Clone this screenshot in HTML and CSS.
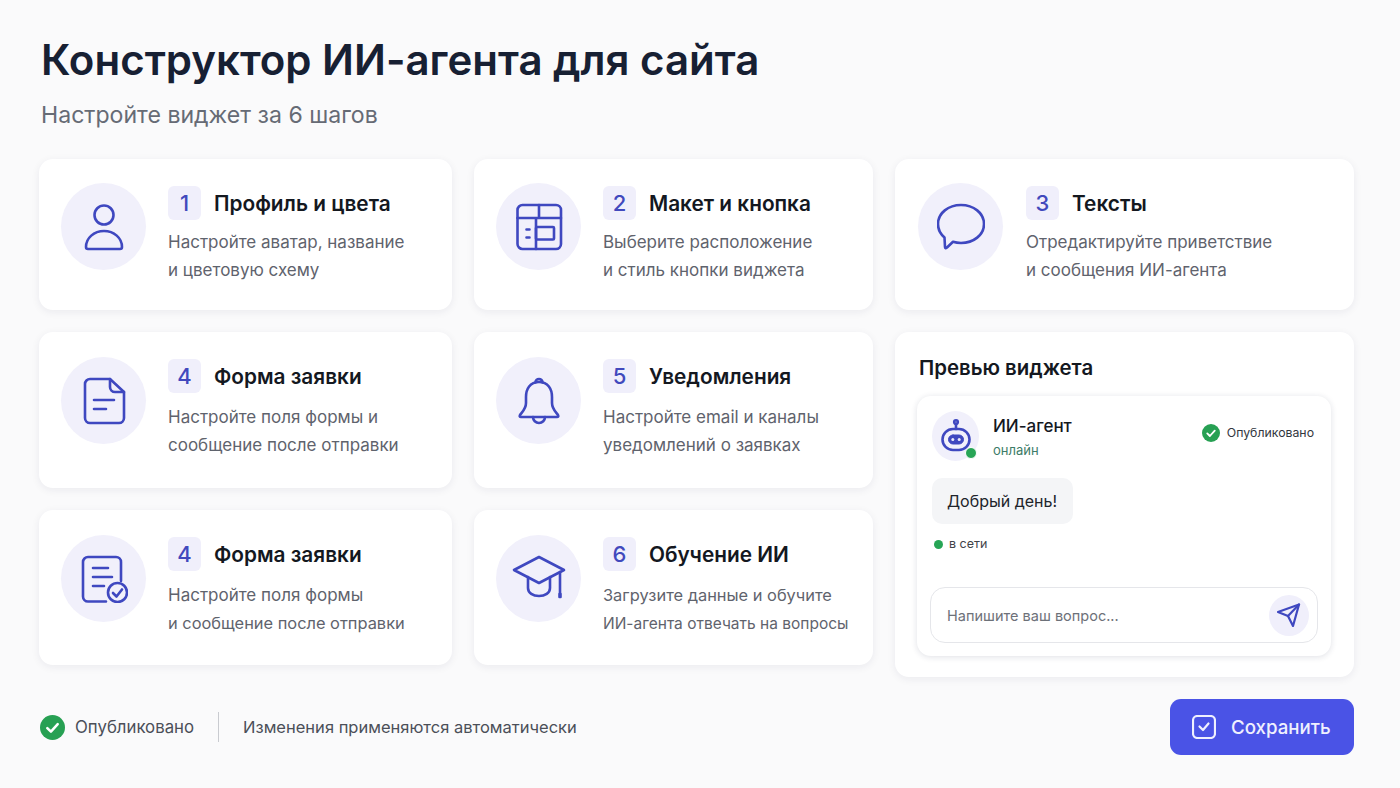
FILE: index.html
```html
<!DOCTYPE html>
<html lang="ru">
<head>
    <meta charset="UTF-8">
    <meta name="viewport" content="width=device-width, initial-scale=1.0">
    <title>Конструктор ИИ-агента</title>
    <link rel="stylesheet" href="styles.css">
</head>
<body>

<header class="page-head">
    <h1>Конструктор ИИ-агента для сайта</h1>
    <p>Настройте виджет за 6 шагов</p>
</header>

<main class="steps">

    <section class="step step-short">
        <div class="step-icon">
            <svg class="icon" width="48" height="48" viewBox="0 0 48 48">
                <circle cx="24" cy="12" r="9.5"/>
                <path d="M8 46H40a2 2 0 0 0 2-2C42 35 34 28 24 28S6 35 6 44a2 2 0 0 0 2 2Z"/>
            </svg>
        </div>
        <div class="step-body">
            <div class="step-title"><span class="num">1</span><h3>Профиль и цвета</h3></div>
            <p>Настройте аватар, название<br>и цветовую схему</p>
        </div>
    </section>

    <section class="step step-short">
        <div class="step-icon">
            <svg class="icon" width="48" height="48" viewBox="0 0 48 48">
                <rect x="2.5" y="2" width="43.5" height="44" rx="5"/>
                <path d="M2.5 15H46M24 2V15M21 15V46"/>
                <rect x="21" y="24" width="18" height="12.5" rx="1"/>
                <path d="M11.5 26.500H14.500M11.500 34.500H14.500"/>
            </svg>
        </div>
        <div class="step-body">
            <div class="step-title"><span class="num">2</span><h3>Макет и кнопка</h3></div>
            <p>Выберите расположение<br>и стиль кнопки виджета</p>
        </div>
    </section>

    <section class="step step-short step-wide">
        <div class="step-icon">
            <svg class="icon" width="48" height="48" viewBox="0 0 48 48">
                <path d="M24 2C36.500 2 47 10 47 21C47 32 36.500 40 24 40C21 40 18.500 39.600 16 38.800L10 44.500Q8 46 8 44L7.500 34.500C3.500 31 1 26.500 1 21C1 10 11.500 2 24 2Z"/>
            </svg>
        </div>
        <div class="step-body">
            <div class="step-title"><span class="num">3</span><h3>Тексты</h3></div>
            <p>Отредактируйте приветствие<br>и сообщения ИИ-агента</p>
        </div>
    </section>

    <section class="step">
        <div class="step-icon">
            <svg class="icon" width="48" height="48" viewBox="0 0 48 48">
                <path d="M10 2H30L44 15V41a5 5 0 0 1-5 5H10a5 5 0 0 1-5-5V7a5 5 0 0 1 5-5Z"/>
                <path d="M30 2V10a5 5 0 0 0 5 5H44"/>
                <path d="M14 23H34M14 32H26"/>
            </svg>
        </div>
        <div class="step-body">
            <div class="step-title"><span class="num">4</span><h3>Форма заявки</h3></div>
            <p>Настройте поля формы и<br>сообщение после отправки</p>
        </div>
    </section>

    <section class="step">
        <div class="step-icon">
            <svg class="icon" width="48" height="48" viewBox="0 0 48 48">
                <path d="M24 5C15 5 11 12 11 20V26C11 32 7 35 5 38Q4 40 6 40H42Q44 40 43 38C41 35 37 32 37 26V20C37 12 33 5 24 5Z"/>
                <path d="M20.500 5.500a3.500 3.500 0 0 1 7 0"/>
                <path d="M18 40a6 6 0 0 0 12 0"/>
            </svg>
        </div>
        <div class="step-body">
            <div class="step-title"><span class="num">5</span><h3>Уведомления</h3></div>
            <p>Настройте email и каналы<br>уведомлений о заявках</p>
        </div>
    </section>

    <aside class="preview">
        <h2>Превью виджета</h2>
        <div class="widget">
            <div class="widget-head">
                <div class="avatar">
                    <svg class="icon icon-thin" width="32" height="36" viewBox="0 0 32 36">
                        <circle cx="16" cy="4" r="1.800"/>
                        <path d="M16 6V11"/>
                        <rect x="2.500" y="11" width="27" height="21" rx="10.500"/>
                        <rect class="face" x="8.500" y="17" width="15" height="9" rx="4.500"/>
                        <circle class="eye" cx="12.800" cy="21.500" r="1.500"/>
                        <circle class="eye" cx="19.200" cy="21.500" r="1.500"/>
                    </svg>
                    <span class="avatar-dot"></span>
                </div>
                <div class="agent">
                    <strong>ИИ-агент</strong>
                    <span>онлайн</span>
                </div>
                <div class="widget-status">
                    <svg class="check" width="18" height="18" viewBox="0 0 24 24">
                        <circle cx="12" cy="12" r="12"/>
                        <path d="M7 12.500L10.500 16L17 8.800"/>
                    </svg>
                    Опубликовано
                </div>
            </div>
            <div class="bubble">Добрый день!</div>
            <div class="net"><span class="net-dot"></span>в сети</div>
            <div class="ask">
                <span>Напишите ваш вопрос...</span>
                <div class="send">
                    <svg class="icon icon-send" width="24" height="24" viewBox="0 0 24 24">
                        <path d="M22 1.500L1 9L11 13L16 23L22 1.500Z"/>
                        <path d="M11 13L22 1.500"/>
                    </svg>
                </div>
            </div>
        </div>
    </aside>

    <section class="step">
        <div class="step-icon">
            <svg class="icon" width="48" height="48" viewBox="0 0 48 48">
                <path d="M26 46.500H8a5 5 0 0 1-5-5V7a5 5 0 0 1 5-5H36a5 5 0 0 1 5 5V26"/>
                <path d="M13 13H28M13 22H32M13 31H24"/>
                <circle cx="37.500" cy="37.500" r="9.500"/>
                <path d="M33 38L36.500 41.500L42 34.500"/>
            </svg>
        </div>
        <div class="step-body">
            <div class="step-title"><span class="num">4</span><h3>Форма заявки</h3></div>
            <p>Настройте поля формы<br><span class="line-s">и сообщение после отправки</span></p>
        </div>
    </section>

    <section class="step">
        <div class="step-icon">
            <svg class="icon" width="56" height="56" viewBox="0 0 56 56">
                <path d="M28 6L3 19L28 32L53 19L28 6Z"/>
                <path d="M17 26V37C17 42 22 45 28 45S39 42 39 37V26"/>
                <path d="M49 21V42"/>
                <path d="M48.500 43H49.500V46H48.500Z"/>
            </svg>
        </div>
        <div class="step-body">
            <div class="step-title"><span class="num">6</span><h3>Обучение ИИ</h3></div>
            <p><span class="line-s">Загрузите данные и обучите</span><br><span class="line-xs">ИИ-агента отвечать на вопросы</span></p>
        </div>
    </section>
</main>

<footer class="page-foot">
    <div class="state">
        <svg class="check" width="25" height="25" viewBox="0 0 24 24">
            <circle cx="12" cy="12" r="12"/>
            <path d="M7 12.500L10.500 16L17 8.800"/>
        </svg>
        <span class="state-name">Опубликовано</span>
        <i class="sep"></i>
        <span>Изменения применяются автоматически</span>
    </div>
    <button class="save" type="button">
        <svg class="save-icon" width="24" height="24" viewBox="0 0 24 24">
            <rect x="1" y="1" width="22" height="22" rx="4.500"/>
            <path d="M7.500 11.500L11 15L16.500 8.500"/>
        </svg>
        Сохранить
    </button>
</footer>

</body>
</html>
```

FILE: styles.css
```css
body {
    font-family: 'Inter', 'Liberation Sans', sans-serif;
    margin: 0;
    padding: 0;
    height: 788px;
    overflow: hidden;
    background-color: #fafafb;
    color: #14181f;
}

.page-head {
    padding: 35px 40px 0 41px;
}

.page-head h1 {
    margin: 0;
    font-size: 42px;
    line-height: 50px;
    font-weight: 600;
    color: #172033;
}

.page-head p {
    margin: 16px 0 0;
    font-size: 23.100px;
    line-height: 28px;
    color: #666b75;
}

.steps {
    display: grid;
    grid-template-columns: 413px 399px 459px;
    grid-template-rows: 151px 156px 155px;
    gap: 22px;
    margin: 30px 0 0 39px;
}

.step {
    display: flex;
    gap: 22px;
    padding: 25px 0 0 22px;
    background: white;
    border-radius: 14px;
    box-shadow: 0 2px 8px rgba(30, 35, 70, 0.07);
}

.step-short {
    padding-top: 24px;
}

.step-wide {
    padding-left: 23px;
    gap: 23px;
}

.step-icon {
    flex: none;
    display: flex;
    align-items: center;
    justify-content: center;
    width: 85px;
    height: 87px;
    border-radius: 50%;
    background: #f1f0fb;
}

.icon {
    fill: none;
    stroke: #3f48c0;
    stroke-width: 2.600;
    stroke-linecap: round;
    stroke-linejoin: round;
}

.step-body {
    padding-top: 2px;
}

.step-short .step-body {
    padding-top: 3px;
}

.step-short .step-body p {
    margin-top: 8px;
}

.step-title {
    display: flex;
    align-items: center;
    gap: 13px;
}

.num {
    width: 33px;
    height: 34px;
    display: flex;
    align-items: center;
    justify-content: center;
    border-radius: 6px;
    background: #f0effb;
    color: #4149bd;
    font-size: 22px;
    font-weight: 500;
}

.step-title h3 {
    margin: 0;
    font-size: 20.800px;
    font-weight: 600;
    color: #14181f;
}

.step-body p {
    margin: 10px 0 0;
    font-size: 17px;
    line-height: 28px;
    color: #5f636d;
}

.line-s {
    font-size: 16.400px;
}

.line-xs {
    font-size: 15.500px;
}

.preview {
    grid-column: 3;
    grid-row: 2 / span 2;
    margin-bottom: -12px;
    padding: 23px 23px 21px 22px;
    background: white;
    border-radius: 14px;
    box-shadow: 0 2px 8px rgba(30, 35, 70, 0.07);
    display: flex;
    flex-direction: column;
}

.preview h2 {
    margin: 0 0 15px 2px;
    font-size: 20.400px;
    line-height: 26px;
    font-weight: 600;
}

.widget {
    flex: 1;
    padding: 15px 13px 13px 13px;
    border-radius: 14px;
    box-shadow: 0 1px 6px rgba(30, 35, 70, 0.14);
    display: flex;
    flex-direction: column;
}

.widget-head {
    display: flex;
    align-items: flex-start;
    padding-left: 2px;
}

.avatar {
    position: relative;
    flex: none;
    width: 47px;
    height: 50px;
    border-radius: 50%;
    background: #f1f0fb;
    display: flex;
    align-items: center;
    justify-content: center;
}

.avatar-dot {
    position: absolute;
    right: 2px;
    bottom: 2px;
    width: 10px;
    height: 10px;
    border-radius: 50%;
    background: #27a556;
    border: 1px solid white;
}

.face {
    fill: #3f48c0;
    stroke-width: 1;
}

.eye {
    fill: #e9e9fb;
    stroke: none;
}

.agent {
    margin-left: 14px;
    padding-top: 1px;
    display: flex;
    flex-direction: column;
}

.agent strong {
    font-size: 17px;
    line-height: 28px;
    font-weight: 500;
}

.agent span {
    font-size: 13px;
    line-height: 20px;
    color: #3d7c68;
}

.widget-status {
    margin-left: auto;
    margin-top: 13px;
    margin-right: 4px;
    display: flex;
    align-items: center;
    gap: 7px;
    font-size: 12.300px;
    line-height: 18px;
    color: #33373e;
}

.check {
    flex: none;
}

.check circle {
    fill: #27a053;
}

.check path {
    fill: none;
    stroke: white;
    stroke-width: 2.400;
    stroke-linecap: round;
    stroke-linejoin: round;
}

.bubble {
    align-self: flex-start;
    margin: 17px 0 0 2px;
    width: 141px;
    height: 46px;
    box-sizing: border-box;
    padding-left: 15px;
    line-height: 46px;
    font-size: 16px;
    background: #f4f5f7;
    border-radius: 10px;
    color: #20242b;
}

.net {
    display: flex;
    align-items: center;
    gap: 6px;
    margin: 11px 0 0 4px;
    font-size: 12.500px;
    line-height: 18px;
    color: #3f434a;
}

.net-dot {
    width: 9px;
    height: 9px;
    border-radius: 50%;
    background: #27a556;
}

.ask {
    margin-top: auto;
    height: 56px;
    box-sizing: border-box;
    border: 1px solid #e5e6ea;
    border-radius: 15px;
    display: flex;
    align-items: center;
    justify-content: space-between;
    padding: 0 8px 0 16px;
    font-size: 14.500px;
    color: #6d7179;
}

.send {
    width: 40px;
    height: 41px;
    border-radius: 50%;
    background: #f0effb;
    display: flex;
    align-items: center;
    justify-content: center;
}

.icon-send {
    stroke-width: 2.200;
}

.page-foot {
    display: flex;
    align-items: center;
    justify-content: space-between;
    margin: 34px 46px 0 40px;
}

.state {
    display: flex;
    align-items: center;
    font-size: 16.500px;
    color: #4b4f58;
}

.state span {
    margin-left: 10px;
}

.state .state-name {
    font-size: 16.800px;
}

.sep {
    width: 1px;
    height: 30px;
    margin: 0 14px 0 24px;
    background: #c9cbd0;
}

.save {
    width: 184px;
    height: 56px;
    display: flex;
    align-items: center;
    gap: 15px;
    padding: 0 0 0 22px;
    border: 0;
    border-radius: 11px;
    background: #4a53e6;
    color: #eff0fe;
    font-family: inherit;
    font-size: 18.700px;
    font-weight: 500;
}

.save-icon {
    fill: none;
    stroke: #eff0fe;
    stroke-width: 2.200;
    stroke-linecap: round;
    stroke-linejoin: round;
}
```
